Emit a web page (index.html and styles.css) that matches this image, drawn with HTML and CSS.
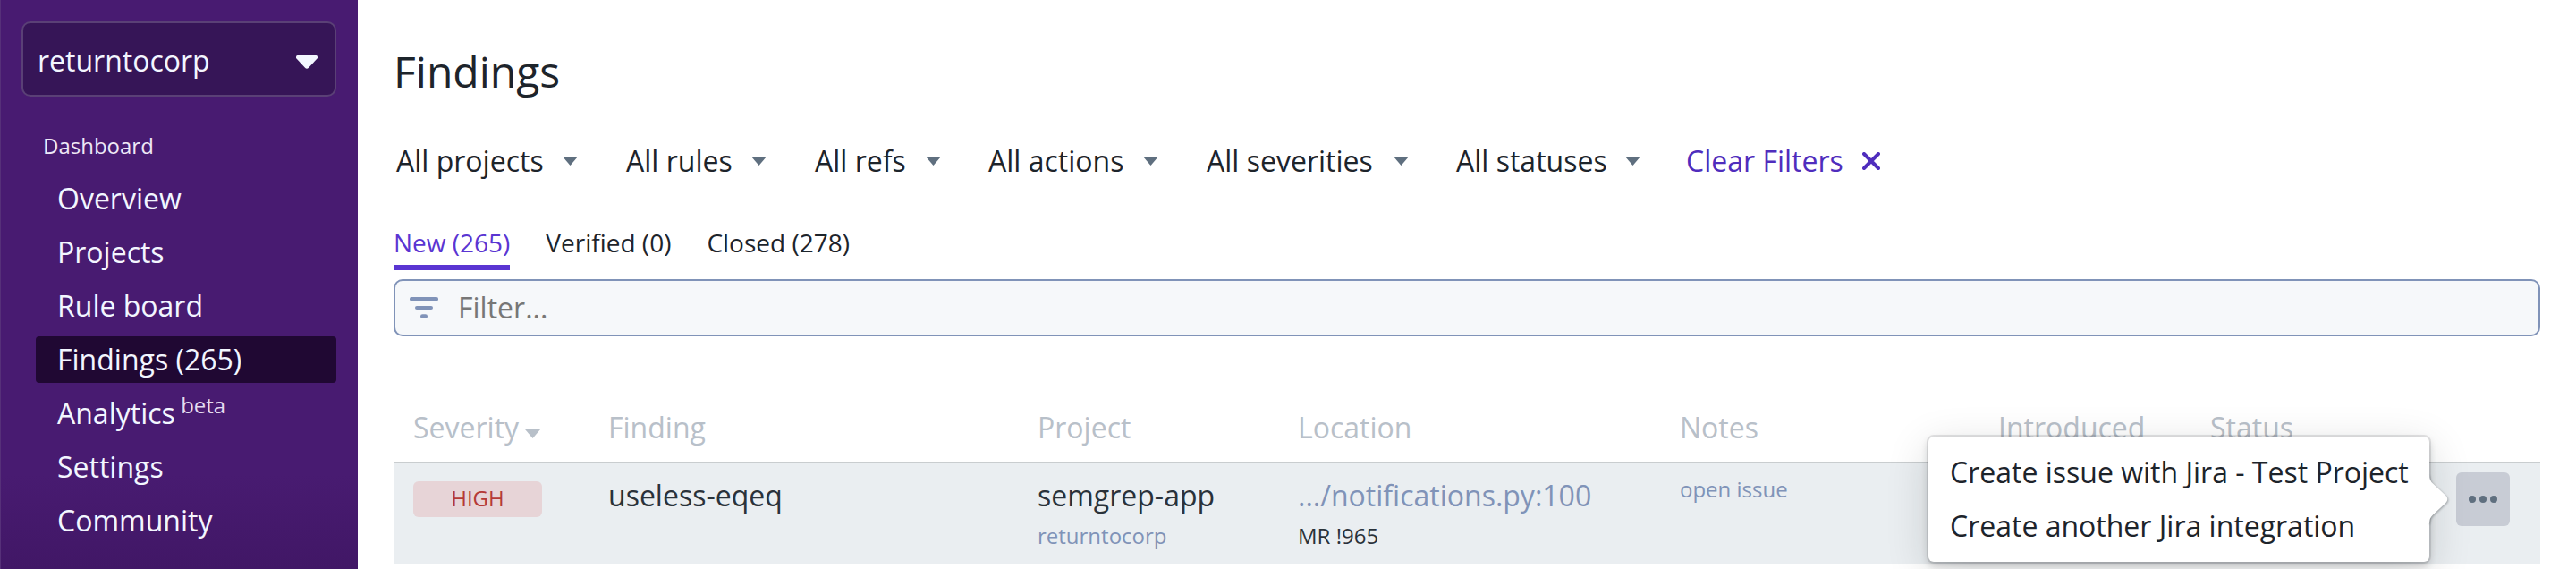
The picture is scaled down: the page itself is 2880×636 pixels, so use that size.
FILE: index.html
```html
<!DOCTYPE html>
<html lang="en">
<head>
<meta charset="utf-8">
<title>Findings</title>
<link rel="stylesheet" href="styles.css">
</head>
<body>
<div class="app">
  <aside class="sidebar">
    <div class="org-select">
      <span>returntocorp</span>
      <svg class="org-caret" width="24" height="15" viewBox="0 0 24 15"><path d="M1.5 0h21Q24 0 24 1.5V3L14 13.7Q12 15.6 10 13.7L0 3V1.5Q0 0 1.5 0z"/></svg>
    </div>
    <div class="nav-heading">Dashboard</div>
    <nav class="nav">
      <a class="nav-item">Overview</a>
      <a class="nav-item">Projects</a>
      <a class="nav-item">Rule board</a>
      <a class="nav-item nav-item-active">Findings (265)</a>
      <a class="nav-item">Analytics <span class="beta">beta</span></a>
      <a class="nav-item">Settings</a>
      <a class="nav-item">Community</a>
    </nav>
  </aside>
  <main class="main">
    <h1 class="title">Findings</h1>
    <div class="filters">
      <span class="filter f-projects">All projects<i class="caret"></i></span>
      <span class="filter f-rules">All rules<i class="caret"></i></span>
      <span class="filter f-refs">All refs<i class="caret"></i></span>
      <span class="filter f-actions">All actions<i class="caret"></i></span>
      <span class="filter f-severities">All severities<i class="caret"></i></span>
      <span class="filter f-statuses">All statuses<i class="caret"></i></span>
      <span class="clear">Clear Filters<svg width="20" height="20" viewBox="0 0 20 20"><path d="M2 2l16 16M18 2L2 18"/></svg></span>
    </div>
    <div class="tabs">
      <span class="tab tab-active">New (265)</span>
      <span class="tab">Verified (0)</span>
      <span class="tab">Closed (278)</span>
    </div>
    <div class="search">
      <svg width="32" height="24" viewBox="0 0 32 24"><rect width="32" height="4.5" rx="2"/><rect x="6" y="10" width="20" height="4" rx="2"/><rect x="12" y="19.3" width="8" height="4.7" rx="2.3"/></svg>
      <span>Filter...</span>
    </div>
    <div class="table">
      <div class="row head">
        <div class="sev-head">Severity<i class="caret caret-sort"></i></div>
        <div>Finding</div>
        <div>Project</div>
        <div>Location</div>
        <div>Notes</div>
        <div>Introduced</div>
        <div>Status</div>
        <div></div>
      </div>
      <div class="row finding">
        <div><span class="badge">HIGH</span></div>
        <div class="primary">useless-eqeq</div>
        <div><div class="primary">semgrep-app</div><div class="sub link">returntocorp</div></div>
        <div><div class="primary link">.../notifications.py:100</div><div class="sub">MR !965</div></div>
        <div class="note link">open issue</div>
        <div></div>
        <div></div>
        <div class="actions">
          <button class="more"><svg width="32" height="8" viewBox="0 0 32 8"><circle cx="4" cy="4" r="4"/><circle cx="16" cy="4" r="4"/><circle cx="28" cy="4" r="4"/></svg></button>
          <div class="menu">
            <div class="menu-item">Create issue with Jira - Test Project</div>
            <div class="menu-item">Create another Jira integration</div>
            <svg class="menu-arrow" width="22" height="54" viewBox="0 0 22 54"><path d="M0 0H1Q1 6 5 9.500L19.500 23Q23 27 19.500 31L5 44.500Q1 48 1 54H0z"/></svg>
          </div>
        </div>
      </div>
    </div>
  </main>
</div>
</body>
</html>
```
FILE: styles.css
```css
* { box-sizing: border-box; }
body {
  margin: 0;
  background: #fff;
  color: #1d242b;
  font: 32px/44px "Open Sans", "Noto Sans", sans-serif;
}
.app { display: flex; width: 2880px; height: 636px; overflow: hidden; }

.sidebar {
  flex: 0 0 400px;
  padding: 24px 24px 0 23px;
  border-left: 1px solid #563079;
  background: linear-gradient(#481b71 0, #481b71 530px, #411766 636px);
  color: #f3f6ff;
}
.org-select {
  display: flex;
  align-items: center;
  justify-content: space-between;
  height: 84px;
  padding: 0 19px 0 16px;
  border: 2px solid #5a4076;
  border-radius: 10px;
  background: #361557;
}
.org-select span { position: relative; top: 2px; }
.org-caret { fill: #f3f6ff; position: relative; top: 3px; }
.nav-heading { margin: 38px 0 0 24px; font-size: 24px; line-height: 34px; color: #eee8f6; }
.nav { display: flex; flex-direction: column; gap: 8px; margin: 16px 0 0 16px; }
.nav-item { height: 52px; padding-left: 24px; border-radius: 4px; line-height: 52px; white-space: nowrap; }
.nav-item-active { background: #200833; }
.beta { position: relative; top: -12px; margin-left: -2px; font-size: 24px; line-height: 1; color: #e3dcf0; }

.main { flex: 1; padding: 50px 40px 0; }
.title { margin: 0; font-size: 48px; font-weight: 400; line-height: 60px; }
.filters { display: flex; padding: 48px 0 0 3px; white-space: nowrap; }
.filter { display: flex; align-items: center; justify-content: space-between; }
.f-projects { width: 203px; margin-right: 54px; }
.f-rules { width: 157px; margin-right: 54px; }
.f-refs { width: 141px; margin-right: 53px; }
.f-actions { width: 190px; margin-right: 54px; }
.f-severities { width: 226px; margin-right: 53px; }
.f-statuses { width: 206px; margin-right: 51px; }
.caret { width: 17px; height: 10px; background: #5f6f7f; clip-path: polygon(0 0, 100% 0, 50% 100%); }
.clear { display: flex; align-items: center; gap: 21px; color: #4f2dbd; }
.clear svg { fill: none; stroke: #4f2dbd; stroke-width: 4; stroke-linecap: round; }
.tabs { display: flex; gap: 40px; height: 52px; margin-top: 48px; font-size: 28px; line-height: 42px; }
.tab { height: 52px; }
.tab-active { color: #5a35d2; border-bottom: 6px solid #5a35d2; }
.search {
  display: flex;
  align-items: center;
  gap: 22px;
  height: 64px;
  margin-top: 10px;
  padding-left: 16px;
  border: 2px solid #8093b8;
  border-radius: 10px;
  background: #f6f8fa;
  color: #777;
}
.search svg { fill: #8093b8; }

.table { margin-top: 78px; }
.row { display: grid; grid-template-columns: 218px 480px 291px 427px 356px 237px 275px 94px; padding-left: 22px; }
.head { height: 64px; border-bottom: 2px solid #c9cdcf; color: #b8c0c9; line-height: 48px; }
.sev-head { display: flex; align-items: center; gap: 7px; }
.head > div { height: 48px; }
.caret-sort { background: #b8c0c9; margin-top: 14px; }
.finding { height: 112px; background: #eaeef1; color: #2a323a; }
.badge {
  display: block;
  width: 144px;
  height: 40px;
  margin-top: 20px;
  border-radius: 6px;
  background: #e7d4d7;
  color: #b53a36;
  font-size: 24px;
  line-height: 38px;
  text-align: center;
}
.primary { padding-top: 14px; }
.sub { margin-top: 5px; font-size: 24px; line-height: 36px; }
.note { padding-top: 12px; font-size: 24px; line-height: 34px; }
.link { color: #8093b8; }
.actions { position: relative; padding-top: 10px; }
.more {
  display: flex;
  align-items: center;
  justify-content: center;
  width: 60px;
  height: 60px;
  padding: 0;
  border: 0;
  border-radius: 6px;
  background: #c8ccd5;
}
.more svg { fill: #5f6f7f; }
.menu {
  position: absolute;
  top: -30px;
  right: 124px;
  width: 560px;
  height: 140px;
  padding: 10px 24px;
  border-radius: 6px;
  background: #fff;
  color: #1d242b;
  box-shadow: 0 0 0 2px rgba(16, 22, 26, .1), 0 4px 8px rgba(16, 22, 26, .2), 0 12px 48px rgba(16, 22, 26, .16);
}
.menu-item { line-height: 60px; white-space: nowrap; }
.menu-arrow { position: absolute; left: 559px; top: 43px; fill: #fff; filter: drop-shadow(1px 1px 1px rgba(16, 22, 26, .3)); }
```
